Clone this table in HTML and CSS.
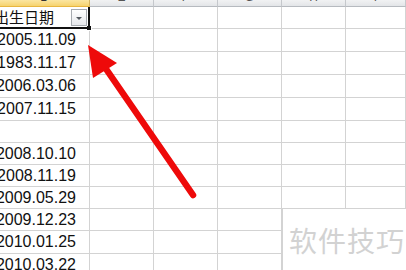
FILE: index.html
```html
<!DOCTYPE html>
<html lang="zh">
<head>
<meta charset="utf-8">
<link rel="stylesheet" href="styles.css">
</head>
<body>
<div class="sheet">
  <div class="row head">
    <div class="hc sel"><span>D</span></div>
    <div class="hc"><span>E</span></div>
    <div class="hc"><span>F</span></div>
    <div class="hc"><span>G</span></div>
    <div class="hc"><span>H</span></div>
    <div class="hc"><span>I</span></div>
  </div>
  <div class="row r22">
    <div class="c d title"><span class="label">出生日期</span><span class="dd"><i></i></span><b class="handle"></b></div>
    <div class="c"></div><div class="c"></div><div class="c"></div><div class="c"></div><div class="c"></div>
  </div>
  <div class="row r23"><div class="c d">2005.11.09</div><div class="c"></div><div class="c"></div><div class="c"></div><div class="c"></div><div class="c"></div></div>
  <div class="row r23"><div class="c d">1983.11.17</div><div class="c"></div><div class="c"></div><div class="c"></div><div class="c"></div><div class="c"></div></div>
  <div class="row r23"><div class="c d">2006.03.06</div><div class="c"></div><div class="c"></div><div class="c"></div><div class="c"></div><div class="c"></div></div>
  <div class="row r23"><div class="c d">2007.11.15</div><div class="c"></div><div class="c"></div><div class="c"></div><div class="c"></div><div class="c"></div></div>
  <div class="row r22"><div class="c d"></div><div class="c"></div><div class="c"></div><div class="c"></div><div class="c"></div><div class="c"></div></div>
  <div class="row r22"><div class="c d">2008.10.10</div><div class="c"></div><div class="c"></div><div class="c"></div><div class="c"></div><div class="c"></div></div>
  <div class="row r22"><div class="c d">2008.11.19</div><div class="c"></div><div class="c"></div><div class="c"></div><div class="c"></div><div class="c"></div></div>
  <div class="row r22"><div class="c d">2009.05.29</div><div class="c"></div><div class="c"></div><div class="c"></div><div class="c"></div><div class="c"></div></div>
  <div class="row r22"><div class="c d">2009.12.23</div><div class="c"></div><div class="c"></div><div class="c"></div><div class="c"></div><div class="c"></div></div>
  <div class="row r23"><div class="c d">2010.01.25</div><div class="c"></div><div class="c"></div><div class="c"></div><div class="c"></div><div class="c"></div></div>
  <div class="row r22"><div class="c d">2010.03.22</div><div class="c"></div><div class="c"></div><div class="c"></div><div class="c"></div><div class="c"></div></div>
</div>
<div class="watermark">软件技巧</div>
<svg class="arrow" width="406" height="270" viewBox="0 0 406 270">
  <line x1="104" y1="66" x2="193" y2="195" stroke="#ee0a0a" stroke-width="6.5" stroke-linecap="round"/>
  <polygon points="88,45 117,63 93,78" fill="#ee0a0a"/>
</svg>
</body>
</html>
```
FILE: styles.css
```css
html, body {
  margin: 0;
  padding: 0;
  width: 406px;
  height: 270px;
  overflow: hidden;
  background: #ffffff;
}
body {
  position: relative;
  font-family: "Liberation Sans", "Noto Sans CJK SC", sans-serif;
  color: #111111;
}
.sheet {
  display: flex;
  flex-direction: column;
}
.row {
  display: grid;
  grid-template-columns: 90px 64px 64px 64px 64px 1fr;
}
.head {
  height: 7px;
}
.hc {
  box-sizing: border-box;
  height: 7px;
  background: linear-gradient(#f1f2f3, #e3e5e8);
  border-right: 1px solid #c5c8cc;
  border-bottom: 1px solid #b6babf;
  overflow: hidden;
  text-align: center;
  font-size: 12px;
  line-height: 12px;
  color: #555;
}
.hc span {
  display: block;
  margin-top: -9px;
}
.hc.sel {
  background: linear-gradient(#fbe6a2, #f6d36e);
  border-bottom: 1px solid #e8b640;
  border-right: 1px solid #d7b560;
  color: #333;
}
.r22 { height: 22px; }
.r23 { height: 23px; }
.c {
  box-sizing: border-box;
  border-right: 1px solid #d3d3d3;
  border-bottom: 1px solid #d3d3d3;
}
.d {
  display: flex;
  align-items: center;
  justify-content: flex-end;
  padding-right: 13px;
  font-size: 16px;
  overflow: hidden;
  white-space: nowrap;
}
.title {
  position: relative;
  overflow: visible;
  padding-right: 1px;
  gap: 17px;
  font-family: "Noto Sans CJK SC", sans-serif;
  font-size: 15px;
  border-right: 2px solid #111;
  border-bottom: 2px solid #111;
}
.label {
  flex-shrink: 0;
  margin-top: -1px;
}
.dd {
  flex-shrink: 0;
  box-sizing: border-box;
  width: 16px;
  height: 17px;
  border: 1px solid #a7abb0;
  background: linear-gradient(#ffffff, #e6e8eb);
  display: flex;
  align-items: center;
  justify-content: center;
  margin-top: 1px;
}
.dd i {
  width: 0;
  height: 0;
  border-left: 3px solid transparent;
  border-right: 3px solid transparent;
  border-top: 3px solid #555a60;
  margin-top: 1px;
}
.handle {
  position: absolute;
  right: -4px;
  bottom: -4px;
  width: 4px;
  height: 4px;
  background: #111;
  border: 1px solid #fff;
  border-left: none;
  border-top: none;
  z-index: 2;
}
.watermark {
  position: absolute;
  left: 282px;
  top: 209px;
  width: 124px;
  height: 61px;
  background: #ffffff;
  box-sizing: border-box;
  padding: 13px 0 0 6px;
  font-family: "Noto Sans CJK SC", sans-serif;
  font-size: 28px;
  line-height: 36px;
  letter-spacing: 1px;
  color: #d2d2d2;
  border-left: 1px solid #d3d3d3;
}
.arrow {
  position: absolute;
  left: 0;
  top: 0;
}
```
